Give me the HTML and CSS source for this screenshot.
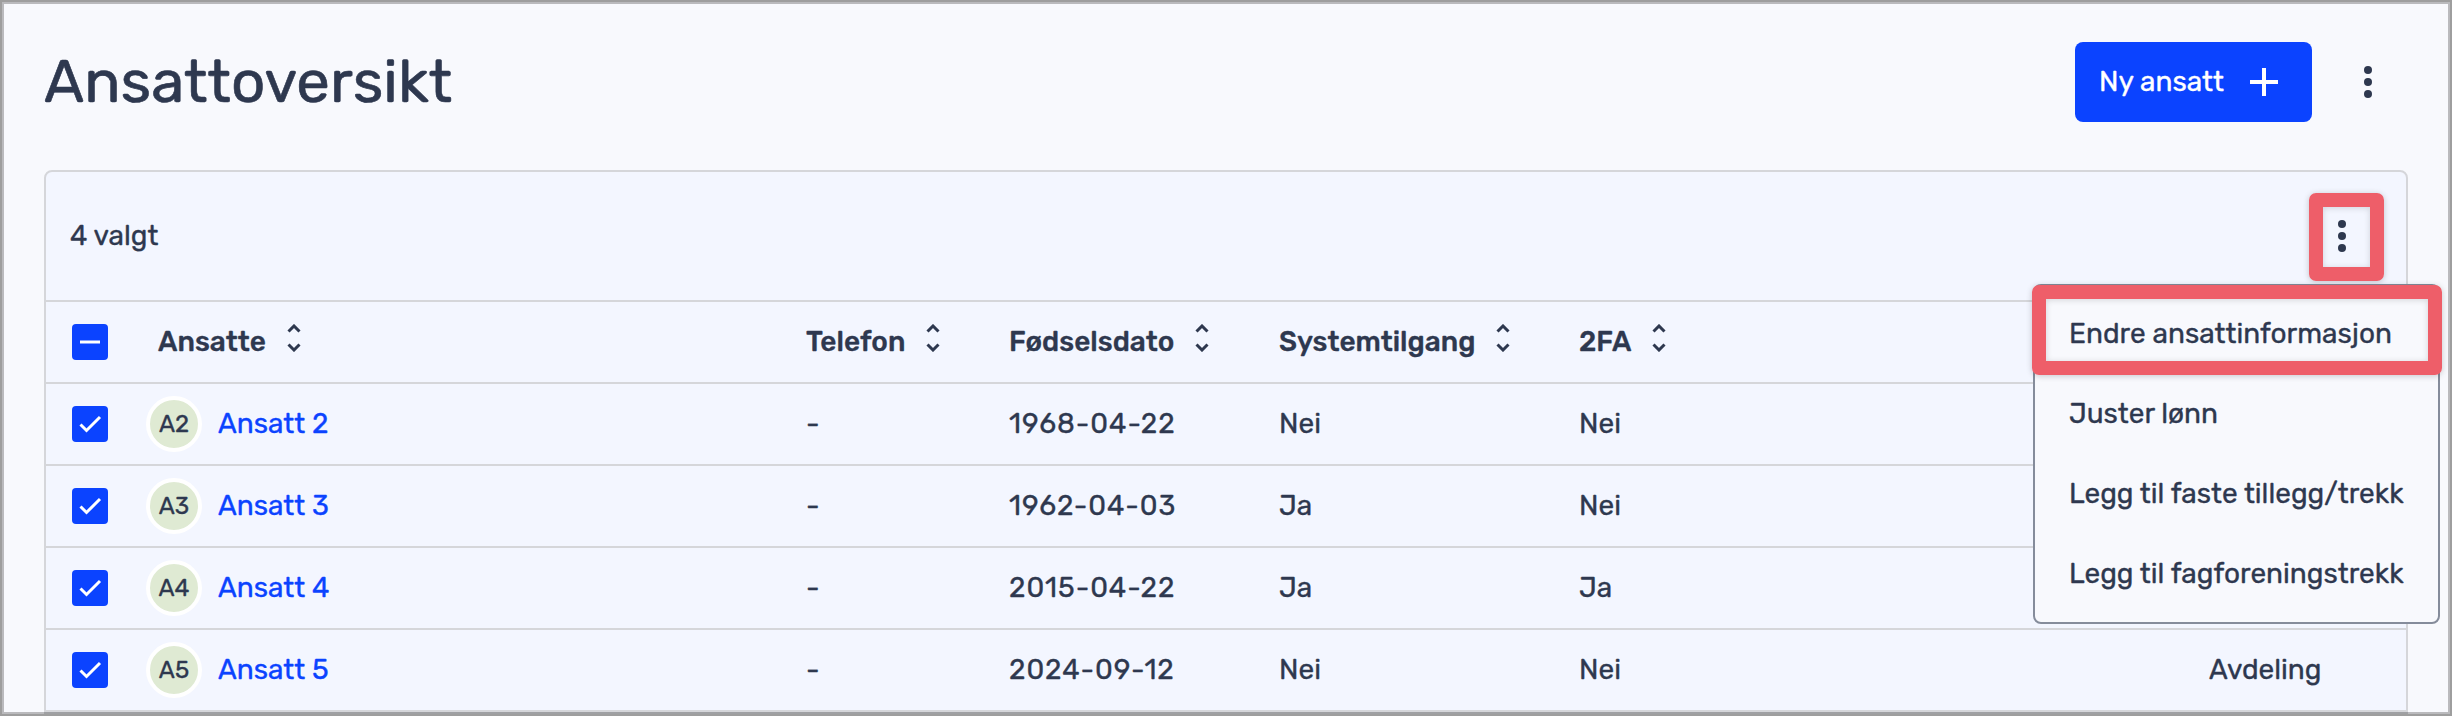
FILE: index.html
```
<!DOCTYPE html>
<html lang="no">
<head>
    <meta charset="UTF-8">
    <meta name="viewport" content="width=device-width, initial-scale=1.0">
    <title>Ansattoversikt</title>
    <link rel="stylesheet" href="styles.css">
</head>
<body>
    <svg class="sprite" width="0" height="0">
        <symbol id="kebab" viewBox="0 0 8 32"><circle cx="4" cy="4" r="4"/><circle cx="4" cy="16" r="4"/><circle cx="4" cy="28" r="4"/></symbol>
        <symbol id="sort" viewBox="0 0 14 28"><path d="M1.500 7.500 7 2l5.500 5.500M1.500 20.500 7 26l5.500-5.500"/></symbol>
        <symbol id="check" viewBox="0 0 36 36"><path d="M8.500 18.500 14.500 24.500 28 11"/></symbol>
        <symbol id="minus" viewBox="0 0 36 36"><path d="M8 18h20"/></symbol>
    </svg>

    <div class="page">
        <header class="header">
            <h1 class="title">Ansattoversikt</h1>
            <div class="header-actions">
                <button class="btn">Ny ansatt<svg class="plus" viewBox="0 0 28 28"><path d="M14 0v28M0 14h28"/></svg></button>
                <svg class="kebab"><use href="#kebab"/></svg>
            </div>
        </header>

        <main class="card">
            <div class="selection">
                <span>4 valgt</span>
                <div class="more">
                    <svg class="kebab"><use href="#kebab"/></svg>
                    <div class="mark mark-more"></div>
                    <div class="menu">
                        <div class="item">Endre ansattinformasjon</div>
                        <div class="item">Juster lønn</div>
                        <div class="item">Legg til faste tillegg/trekk</div>
                        <div class="item">Legg til fagforeningstrekk</div>
                        <div class="mark mark-item"></div>
                    </div>
                </div>
            </div>

            <!-- tabell -->
            <div class="row head">
                <div class="cell"><svg class="box"><use href="#minus"/></svg></div>
                <div class="cell">Ansatte<svg class="sort"><use href="#sort"/></svg></div>
                <div class="cell">Telefon<svg class="sort"><use href="#sort"/></svg></div>
                <div class="cell">Fødselsdato<svg class="sort"><use href="#sort"/></svg></div>
                <div class="cell">Systemtilgang<svg class="sort"><use href="#sort"/></svg></div>
                <div class="cell">2FA<svg class="sort"><use href="#sort"/></svg></div>
                <div class="cell"></div>
            </div>
            <div class="row">
                <div class="cell"><svg class="box"><use href="#check"/></svg></div>
                <div class="cell name"><span class="avatar">A2</span><a class="link">Ansatt 2</a></div>
                <div class="cell">-</div>
                <div class="cell date">1968-04-22</div>
                <div class="cell">Nei</div>
                <div class="cell">Nei</div>
                <div class="cell"></div>
            </div>
            <div class="row">
                <div class="cell"><svg class="box"><use href="#check"/></svg></div>
                <div class="cell name"><span class="avatar">A3</span><a class="link">Ansatt 3</a></div>
                <div class="cell">-</div>
                <div class="cell date">1962-04-03</div>
                <div class="cell">Ja</div>
                <div class="cell">Nei</div>
                <div class="cell"></div>
            </div>
            <div class="row">
                <div class="cell"><svg class="box"><use href="#check"/></svg></div>
                <div class="cell name"><span class="avatar">A4</span><a class="link">Ansatt 4</a></div>
                <div class="cell">-</div>
                <div class="cell date">2015-04-22</div>
                <div class="cell">Ja</div>
                <div class="cell">Ja</div>
                <div class="cell"></div>
            </div>
            <div class="row">
                <div class="cell"><svg class="box"><use href="#check"/></svg></div>
                <div class="cell name"><span class="avatar">A5</span><a class="link">Ansatt 5</a></div>
                <div class="cell">-</div>
                <div class="cell date">2024-09-12</div>
                <div class="cell">Nei</div>
                <div class="cell">Nei</div>
                <div class="cell">Avdeling</div>
            </div>
        </main>
    </div>
</body>
</html>
```
FILE: styles.css
```
* {
    box-sizing: border-box;
}
body {
    margin: 0;
    background: #f8f9fd;
    color: #2e384f;
    font: 28px/40px Rubik, Roboto, "Liberation Sans", sans-serif;
    -webkit-text-stroke: .35px;
}
.sprite {
    position: absolute;
}
.page {
    height: 716px;
    padding: 42px 44px 0;
    overflow: hidden;
}
/* grey frame, lies over everything */
.page::after {
    content: "";
    position: fixed;
    inset: 0;
    border: 2px solid #9e9e9e;
    box-shadow: inset 0 0 0 2px rgba(0, 0, 0, .25);
    pointer-events: none;
}
.header {
    display: flex;
    justify-content: space-between;
    height: 128px;
}
.title {
    margin: 0;
    font-size: 60px;
    font-weight: 400;
    line-height: 80px;
    -webkit-text-stroke: .6px;
}
.header-actions {
    display: flex;
    align-items: center;
    height: 80px;
    padding-right: 36px;
    gap: 52px;
}
.btn {
    display: flex;
    align-items: center;
    justify-content: space-between;
    width: 237px;
    height: 80px;
    padding: 0 34px 0 24px;
    border: 0;
    border-radius: 8px;
    background: #0b43ff;
    color: #fff;
    font: inherit;
}
.plus {
    width: 28px;
    height: 28px;
    stroke: #fff;
    stroke-width: 4;
}
.kebab {
    display: block;
    width: 8px;
    height: 32px;
    fill: #2e384f;
}
.card {
    border: 2px solid #d5d6da;
    border-radius: 8px 8px 0 0;
    background: #f3f6ff;
}
.selection {
    display: flex;
    align-items: center;
    justify-content: space-between;
    height: 128px;
    padding: 0 60px 0 24px;
}
.more {
    position: relative;
}
.menu {
    position: absolute;
    z-index: 1;
    top: 64px;
    right: -94px;
    width: 407px;
    padding: 8px 0;
    border: 2px solid #858c9b;
    border-radius: 8px;
    background: #f8f9fd;
}
.item {
    height: 80px;
    padding-left: 34px;
    line-height: 80px;
    white-space: nowrap;
}
.mark {
    position: absolute;
    border: 14px solid #ee5e69;
    border-radius: 7px;
    box-shadow: 0 1px 6px rgba(0, 0, 0, .2), inset 0 1px 6px rgba(0, 0, 0, .15);
}
.mark-more {
    top: -27px;
    left: -29px;
    width: 75px;
    height: 88px;
}
.mark-item {
    top: -1px;
    left: -3px;
    width: 410px;
    height: 90px;
}
.row {
    display: grid;
    grid-template-columns: 112px 648px 203px 270px 300px 630px 1fr;
    height: 82px;
    border-top: 2px solid #d5d6da;
}
.row:last-child {
    height: 84px;
    border-bottom: 2px solid #d5d6da;
}
.cell {
    display: flex;
    align-items: center;
}
.cell:first-child {
    padding-left: 26px;
}
.head {
    font-weight: 500;
}
.sort {
    width: 14px;
    height: 28px;
    margin: -8px 0 0 21px;
    fill: none;
    stroke: #2e384f;
    stroke-width: 3;
}
.box {
    width: 36px;
    height: 36px;
    border-radius: 4px;
    background: #0b43ff;
    fill: none;
    stroke: #fff;
    stroke-width: 3;
}
.name {
    margin-left: -12px;
    gap: 16px;
}
.avatar {
    width: 56px;
    height: 56px;
    border: 4px solid #fff;
    border-radius: 50%;
    background: #dfead3;
    font-size: 24px;
    line-height: 48px;
    text-align: center;
}
.link {
    color: #0b43ff;
}
.date {
    letter-spacing: .95px;
}
```
